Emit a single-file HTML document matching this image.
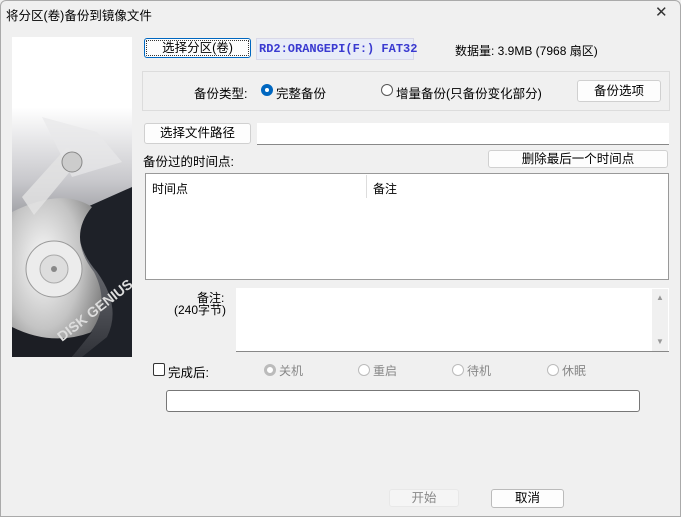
<!DOCTYPE html>
<html><head><meta charset="utf-8"><style>
*{margin:0;padding:0;box-sizing:border-box}
body{width:681px;height:517px;background:#f0f0f0;font-family:"Liberation Sans","Noto Sans CJK SC",sans-serif;font-size:12px;color:#000;position:relative;overflow:hidden}
.a{position:absolute;white-space:nowrap}
.btn{position:absolute;background:#fdfdfd;border:1px solid #d0d0d0;border-radius:3px;text-align:center;font-size:12.5px}
.wh{position:absolute;background:#fff}
.rad{position:absolute;width:12px;height:12px;border-radius:50%;border:1px solid #888;background:#fff}
</style></head><body>
<div style="position:absolute;left:0;top:0;width:681px;height:517px;border:1px solid #aaa;border-radius:6px 6px 0 0"></div>
<div class="a" style="left:6px;top:5px;font-size:12.5px">将分区(卷)备份到镜像文件</div>
<div class="a" style="left:655px;top:3px;font-size:15px;color:#333">✕</div>

<svg class="a" style="left:12px;top:37px" width="120" height="320" viewBox="0 0 120 320">
<defs><linearGradient id="g" x1="0" y1="0" x2="0" y2="1"><stop offset="0.22" stop-color="#fff"/><stop offset="0.45" stop-color="#c8c8cc"/><stop offset="0.7" stop-color="#6a6c72"/><stop offset="1" stop-color="#303238"/></linearGradient>
<radialGradient id="p" cx="0.35" cy="0.4" r="0.7"><stop offset="0" stop-color="#fafafa"/><stop offset="0.6" stop-color="#c4c4c4"/><stop offset="1" stop-color="#808080"/></radialGradient></defs>
<rect width="120" height="320" fill="url(#g)"/>
<path d="M120 150 L75 170 Q55 200 85 235 Q110 270 95 300 L70 320 L120 320Z" fill="#1e2128"/>
<path d="M0 175 Q50 150 80 170 Q55 200 82 235 Q100 270 75 300 L60 320 L0 320Z" fill="url(#p)"/>
<path d="M0 290 Q40 310 80 295 L60 320 L0 320Z" fill="#1c1e24"/>
<circle cx="42" cy="232" r="28" fill="#ececec" stroke="#999"/>
<circle cx="42" cy="232" r="14" fill="#ddd" stroke="#aaa"/>
<circle cx="42" cy="232" r="3" fill="#888"/>
<path d="M10 160 L55 110 L70 120 L22 178Z" fill="#e4e4e4" opacity="0.8"/>
<path d="M30 80 L85 95 L110 125 L60 140Z" fill="#e8e8ea" opacity="0.7"/>
<circle cx="60" cy="125" r="10" fill="#ccc" stroke="#888"/>
<text x="50" y="305" transform="rotate(-38 50 305)" fill="#ddd" font-size="14" font-weight="bold" font-family="Liberation Sans">DISK GENIUS</text>
</svg>

<div class="btn" style="left:144px;top:38px;width:107px;height:20px;line-height:18px;border:1px solid #0067c0;outline:1px dotted #333;outline-offset:-3px">选择分区(卷)</div>
<div class="a" style="left:256px;top:38px;width:158px;height:22px;background:#e8ecf8;border:1px solid #d8d8e8;color:#3a3ad0;font-family:'Liberation Mono',monospace;font-weight:bold;font-size:12px;line-height:20px;padding-left:2px">RD2:ORANGEPI(F:) FAT32</div>
<div class="a" style="left:455px;top:42px">数据量: 3.9MB (7968 扇区)</div>

<div class="a" style="left:142px;top:71px;width:528px;height:40px;border:1px solid #dcdcdc"></div>
<div class="a" style="left:194px;top:83px;font-size:12.5px">备份类型:</div>
<div class="rad" style="left:261px;top:84px;border:4px solid #0067c0"></div>
<div class="a" style="left:276px;top:83px;font-size:12.5px">完整备份</div>
<div class="rad" style="left:381px;top:84px;border-color:#555"></div>
<div class="a" style="left:396px;top:83px;font-size:12.5px">增量备份(只备份变化部分)</div>
<div class="btn" style="left:577px;top:80px;width:84px;height:22px;line-height:20px">备份选项</div>

<div class="btn" style="left:144px;top:123px;width:107px;height:21px;line-height:19px">选择文件路径</div>
<div class="wh" style="left:257px;top:123px;width:412px;height:22px;border-bottom:1px solid #888"></div>
<div class="a" style="left:143px;top:151px;font-size:12.5px">备份过的时间点:</div>
<div class="btn" style="left:488px;top:150px;width:180px;height:18px;line-height:16px">删除最后一个时间点</div>

<div class="wh" style="left:145px;top:173px;width:524px;height:107px;border:1px solid #999"></div>
<div class="a" style="left:366px;top:175px;width:1px;height:23px;background:#ddd"></div>
<div class="a" style="left:152px;top:180px">时间点</div>
<div class="a" style="left:373px;top:180px">备注</div>

<div class="a" style="left:197px;top:292px;line-height:12px">备注:</div>
<div class="a" style="left:174px;top:304px;line-height:12px">(240字节)</div>
<div class="wh" style="left:236px;top:288px;width:433px;height:64px;border-bottom:1px solid #888"></div>
<div class="a" style="left:652px;top:289px;width:16px;height:62px;background:#f0f0f0"></div>
<div class="a" style="left:656px;top:293px;font-size:8px;color:#999">▲</div>
<div class="a" style="left:656px;top:337px;font-size:8px;color:#999">▼</div>

<div class="a" style="left:153px;top:363px;width:12px;height:13px;border:1px solid #333;border-radius:2px;background:#fff"></div>
<div class="a" style="left:168px;top:362px;font-size:12.5px">完成后:</div>
<div class="rad" style="left:264px;top:364px;border:3px solid #bbb;background:#fff"></div>
<div class="a" style="left:279px;top:362px;color:#888">关机</div>
<div class="rad" style="left:358px;top:364px;border-color:#bbb"></div>
<div class="a" style="left:373px;top:362px;color:#888">重启</div>
<div class="rad" style="left:452px;top:364px;border-color:#bbb"></div>
<div class="a" style="left:467px;top:362px;color:#888">待机</div>
<div class="rad" style="left:547px;top:364px;border-color:#bbb"></div>
<div class="a" style="left:562px;top:362px;color:#888">休眠</div>

<div class="wh" style="left:166px;top:390px;width:474px;height:22px;border:1px solid #777;border-radius:3px"></div>

<div class="btn" style="left:389px;top:489px;width:70px;height:18px;line-height:16px;color:#888;background:#f5f5f5;border-color:#e8e8e8">开始</div>
<div class="btn" style="left:491px;top:489px;width:73px;height:19px;line-height:17px;border-color:#bbb">取消</div>
</body></html>
